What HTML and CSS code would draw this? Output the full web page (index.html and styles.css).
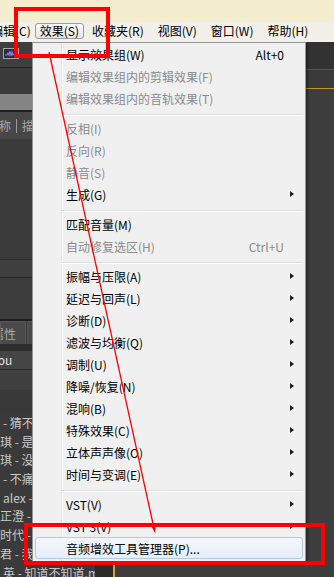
FILE: index.html
```html
<!DOCTYPE html>
<html lang="zh-CN">
<head>
    <meta charset="UTF-8">
    <meta name="viewport" content="width=device-width, initial-scale=1.0">
    <title>效果菜单</title>
    <link rel="stylesheet" href="styles.css">
</head>
<body>
<div class="titlebar"></div>

<nav class="menubar">
    <span class="mb-item first">编辑(C)</span>
    <span class="mb-item open">效果(S)</span>
    <span class="mb-item">收藏夹(R)</span>
    <span class="mb-item">视图(V)</span>
    <span class="mb-item">窗口(W)</span>
    <span class="mb-item">帮助(H)</span>
</nav>

<main class="workspace">
    <section class="panel-left">
        <div class="files-head">
            <svg class="wave-icon" width="16" height="11" viewBox="0 0 16 11">
                <rect x="0.5" y="0.5" width="15" height="10" fill="#2b2a3c" stroke="#a4a4a4"/>
                <polyline points="2,7 4,7 5,5 6,7 7,3 8,8 9,4 10,7 11,6 12,7 14,7" fill="none" stroke="#7f7bff" stroke-width="1.2"/>
            </svg>
        </div>
        <div class="files-bar"></div>
        <div class="files-sel"></div>
        <div class="files-cols">
            <span class="col-name">名称</span>
            <span class="col-sep"></span>
            <span>描述</span>
        </div>
        <div class="files-body"></div>
        <div class="strip"></div>
        <div class="spacer"></div>
        <div class="tabs">
            <span class="tab">属性</span>
            <span class="tab"></span>
        </div>
        <div class="search">You</div>
        <div class="list-head"></div>
        <ul class="playlist">
            <li class="dash">- 猜不</li>
            <li>琪 - 是</li>
            <li>琪 - 没</li>
            <li class="dash">- 不痛</li>
            <li class="dash">alex -</li>
            <li>正澄 -</li>
            <li>时代 -</li>
            <li>君 - 我</li>
            <li class="dash">英 - 知道不知道.mr</li>
        </ul>
    </section>

    <section class="panel-edit">
        <div class="edit-head"></div>
        <div class="ruler"></div>
        <div class="tracks">
            <div class="track-labels"></div>
            <div class="playhead"></div>
        </div>
    </section>
</main>

<!-- 打开的 "效果" 菜单 -->
<div class="dropdown">
    <div class="mi">显示效果组(W)<span class="key">Alt+0</span></div>
    <div class="mi off">编辑效果组内的剪辑效果(F)</div>
    <div class="mi off">编辑效果组内的音轨效果(T)</div>
    <div class="sep"></div>
    <div class="mi off">反相(I)</div>
    <div class="mi off">反向(R)</div>
    <div class="mi off">静音(S)</div>
    <div class="mi">生成(G)<span class="arrow"></span></div>
    <div class="sep"></div>
    <div class="mi">匹配音量(M)</div>
    <div class="mi off">自动修复选区(H)<span class="key">Ctrl+U</span></div>
    <div class="sep"></div>
    <div class="mi">振幅与压限(A)<span class="arrow"></span></div>
    <div class="mi">延迟与回声(L)<span class="arrow"></span></div>
    <div class="mi">诊断(D)<span class="arrow"></span></div>
    <div class="mi">滤波与均衡(Q)<span class="arrow"></span></div>
    <div class="mi">调制(U)<span class="arrow"></span></div>
    <div class="mi">降噪/恢复(N)<span class="arrow"></span></div>
    <div class="mi">混响(B)<span class="arrow"></span></div>
    <div class="mi">特殊效果(C)<span class="arrow"></span></div>
    <div class="mi">立体声声像(O)<span class="arrow"></span></div>
    <div class="mi">时间与变调(E)<span class="arrow"></span></div>
    <div class="sep"></div>
    <div class="mi">VST(V)<span class="arrow"></span></div>
    <div class="mi">VST 3(V)<span class="arrow"></span></div>
    <div class="mi hot">音频增效工具管理器(P)...</div>
</div>

<!-- 红色标注 -->
<svg class="annotations" width="334" height="577" viewBox="0 0 334 577">
    <rect x="16" y="9" width="92" height="47" fill="none" stroke="#ff0000" stroke-width="4"/>
    <rect x="26" y="525" width="297" height="38" fill="none" stroke="#ff0000" stroke-width="4"/>
    <line x1="49" y1="52" x2="153.5" y2="526" stroke="#ff0000" stroke-width="1.3"/>
    <polygon points="155.3,533.5 155.6,523.7 150.6,524.8" fill="#ff0000"/>
</svg>
</body>
</html>
```

FILE: styles.css
```css
body {
    margin: 0;
    width: 334px;
    height: 577px;
    overflow: hidden;
    position: relative;
    background-color: #3c3c3c;
    font-family: "Noto Sans CJK SC", "Liberation Sans", sans-serif;
    font-size: 12px;
}
.titlebar {
    height: 22px;
    background-color: #f4eecf;
}
.menubar {
    height: 20px;
    display: flex;
    align-items: flex-start;
    background-color: #f1f0ea;
    overflow: hidden;
}
.mb-item {
    margin: 1px 1px 0;
    padding: 0 5px;
    height: 14px;
    line-height: 14px;
    border: 1px solid transparent;
    border-radius: 3px;
    white-space: nowrap;
    color: #000;
}
.mb-item.first {
    margin-left: -15px;
    margin-right: -3px;
}
.mb-item.open {
    padding: 0 4px;
    border-color: #9c9c9c;
    background: linear-gradient(#fbfbfb, #e4e4e4);
}

/* рабочая область за меню */
.workspace {
    display: flex;
    height: 535px;
}
.panel-left {
    width: 95px;
    flex-shrink: 0;
    background-color: #3c3c3c;
    color: #c9c9c9;
    white-space: nowrap;
    overflow: hidden;
}
.files-head {
    height: 26px;
    padding: 6px 0 0 3px;
    box-sizing: border-box;
    background-color: #3e3e3e;
    border-bottom: 1px solid #222;
}
.wave-icon {
    display: block;
}
.files-bar {
    height: 26px;
    background-color: #3a3a3a;
}
.files-sel {
    height: 16px;
    background-color: #848484;
}
.files-cols {
    height: 27px;
    display: flex;
    align-items: center;
    gap: 5px;
    border-top: 2px solid #1f1f1f;
    background-color: #474747;
    color: #aaa;
}
.col-name {
    margin-left: -13px;
}
.col-sep {
    width: 1px;
    height: 14px;
    background-color: #999;
}
.files-body {
    height: 120px;
    background-color: #3b3b3b;
}
.strip {
    height: 17px;
    border-top: 1px solid #2a2a2a;
    border-bottom: 1px solid #262626;
    background-color: #404040;
}
.spacer {
    height: 41px;
}
.tabs {
    height: 23px;
    display: flex;
    gap: 1px;
    border-top: 2px solid #1c1c1c;
    border-bottom: 7px solid #2e2e2e;
    background-color: #333;
}
.tab {
    width: 26px;
    line-height: 23px;
    text-indent: -9px;
    box-sizing: border-box;
    border: 1px solid #585858;
    border-bottom: none;
    background-color: #4a4a4a;
    color: #a8a8a8;
    overflow: hidden;
}
.tab:last-child {
    flex: 1;
}
.search {
    height: 18px;
    line-height: 18px;
    text-indent: -8px;
    background-color: #454545;
    color: #e2e2e2;
}
.list-head {
    height: 20px;
    border-top: 1px solid #2a2a2a;
    border-bottom: 24px solid #393939;
    background-color: #404040;
}
.playlist {
    list-style: none;
    margin: 0;
    padding: 0;
    background-color: #3a3a3a;
}
.playlist li {
    height: 18.7px;
    line-height: 18.7px;
}
.playlist li.dash {
    padding-left: 3px;
}
.panel-edit {
    flex: 1;
    display: flex;
    flex-direction: column;
    background-color: #3d3d3d;
}
.edit-head {
    height: 27px;
    background-color: #323232;
    border-bottom: 1px solid #555;
}
.ruler {
    height: 18px;
    background-color: #3a3a3a;
    border-bottom: 1px solid #c8962e;
}
.tracks {
    flex: 1;
    display: flex;
}
.track-labels {
    width: 18px;
    background-color: #2b2b2b;
}
.playhead {
    width: 2px;
    background-color: #e0a030;
}

/* выпадающее меню */
.dropdown {
    position: absolute;
    left: 32px;
    top: 42px;
    width: 274px;
    box-sizing: border-box;
    padding: 0 2px 2px;
    border: 1px solid #979797;
    background: #f0f0f0 linear-gradient(to right, transparent 28px, #e2e3e3 28px, #e2e3e3 29px, #fff 29px, #fff 30px, transparent 30px);
    box-shadow: 2px 2px 2px rgba(0, 0, 0, 0.35);
}
.mi {
    display: flex;
    align-items: center;
    height: 22px;
    box-sizing: border-box;
    padding: 0 8px 0 30px;
    border: 1px solid transparent;
    white-space: nowrap;
    color: #000;
}
.mi.off {
    color: #8b8b8b;
}
.mi.hot {
    border-color: #a9ccef;
    border-radius: 3px;
    background: linear-gradient(#f4f8fd, #e6eef9);
}
.key {
    margin-left: auto;
    margin-right: 10px;
}
.arrow {
    margin-left: auto;
    width: 0;
    height: 0;
    border-left: 4px solid #1e1e1e;
    border-top: 3.5px solid transparent;
    border-bottom: 3.5px solid transparent;
}
.sep {
    height: 0;
    margin: 5px 0 1px 26px;
    border-top: 1px solid #e0e0e0;
    border-bottom: 1px solid #fff;
}
.annotations {
    position: absolute;
    left: 0;
    top: 0;
    pointer-events: none;
}
```
